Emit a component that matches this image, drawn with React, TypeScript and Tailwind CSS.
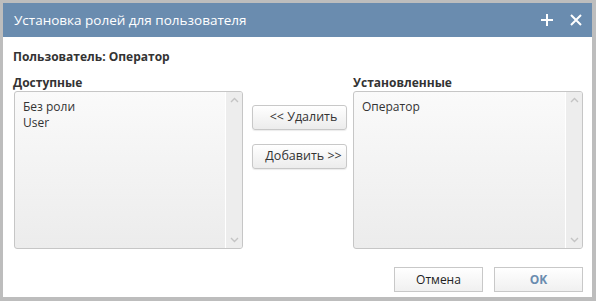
import React from 'react';

const font = { fontFamily: '"Open Sans", "Liberation Sans", sans-serif' };

const Chevron: React.FC<{ up?: boolean }> = ({ up }) => (
  <svg width="9" height="6" viewBox="0 0 9 6" className="text-[#c4c4c4]">
    <path d={up ? 'M1 5 L4.5 1.5 L8 5' : 'M1 1 L4.5 4.5 L8 1'} fill="none" stroke="currentColor" strokeWidth="1.4" />
  </svg>
);

const ListBox: React.FC<{ items: string[] }> = ({ items }) => (
  <div className="flex h-[158px] rounded-[3px] border border-[#c6c6c6] bg-gradient-to-b from-[#fafafa] to-[#ececec] overflow-hidden">
    <div className="flex-1 px-2 pt-[7px] text-[12px] leading-[16px] text-[#333]">
      {items.map((i) => (
        <div key={i}>{i}</div>
      ))}
    </div>
    <div className="w-[17px] border-l border-white bg-[#ededed] flex flex-col items-center justify-between py-[5px]">
      <Chevron up />
      <Chevron />
    </div>
  </div>
);

const MidButton: React.FC<{ children: React.ReactNode }> = ({ children }) => (
  <button className="h-[25px] w-[95px] rounded-[3px] border border-[#c8c8c8] bg-gradient-to-b from-white to-[#ececec] pl-2 text-[12.5px] text-[#333] shadow-[0_1px_1px_rgba(0,0,0,0.08)]">
    {children}
  </button>
);

const App: React.FC = () => {
  return (
    <div className="w-[596px] h-[301px] bg-[#bdbdbd] pt-[3px] pl-[3px] pr-[4px] pb-[4px]" style={font}>
      <div className="flex h-full flex-col bg-white">
        <div className="flex h-[34px] items-center justify-between bg-[#6a8caf] pl-[11px] pr-[10px] text-white">
          <span className="text-[13.5px]">Установка ролей для пользователя</span>
          <div className="flex items-center gap-[17px]">
            <svg width="12" height="12" viewBox="0 0 12 12">
              <path d="M6 0 V12 M0 6 H12" stroke="white" strokeWidth="2" />
            </svg>
            <svg width="12" height="12" viewBox="0 0 12 12">
              <path d="M1 1 L11 11 M11 1 L1 11" stroke="white" strokeWidth="2" />
            </svg>
          </div>
        </div>

        <div className="flex flex-1 flex-col pl-[10px] pr-[9px]">
          <div className="mt-[12px] text-[12px] font-bold leading-[16px] text-[#333]">Пользователь: Оператор</div>
          <div className="mt-[10px] flex">
            <div className="w-[230px] pl-px">
              <div className="-ml-px text-[12px] font-bold leading-[16px] text-[#333]">Доступные</div>
              <ListBox items={['Без роли', 'User']} />
            </div>
            <div className="ml-[9px] flex flex-col gap-[14px] pt-[30px]">
              <MidButton>&lt;&lt; Удалить</MidButton>
              <MidButton>Добавить &gt;&gt;</MidButton>
            </div>
            <div className="ml-[6px] w-[230px]">
              <div className="text-[12px] font-bold leading-[16px] text-[#333]">Установленные</div>
              <ListBox items={['Оператор']} />
            </div>
          </div>
          <div className="mt-[18px] flex justify-end gap-[11px]">
            <button className="h-[25px] w-[89px] border border-[#c8c8c8] bg-gradient-to-b from-white to-[#f0f0f0] text-[12px] text-[#222]">
              Отмена
            </button>
            <button className="h-[25px] w-[89px] border border-[#c8c8c8] bg-gradient-to-b from-white to-[#f0f0f0] text-[12px] font-bold text-[#6a8caf]">
              OK
            </button>
          </div>
        </div>
      </div>
    </div>
  );
};

export default App;
